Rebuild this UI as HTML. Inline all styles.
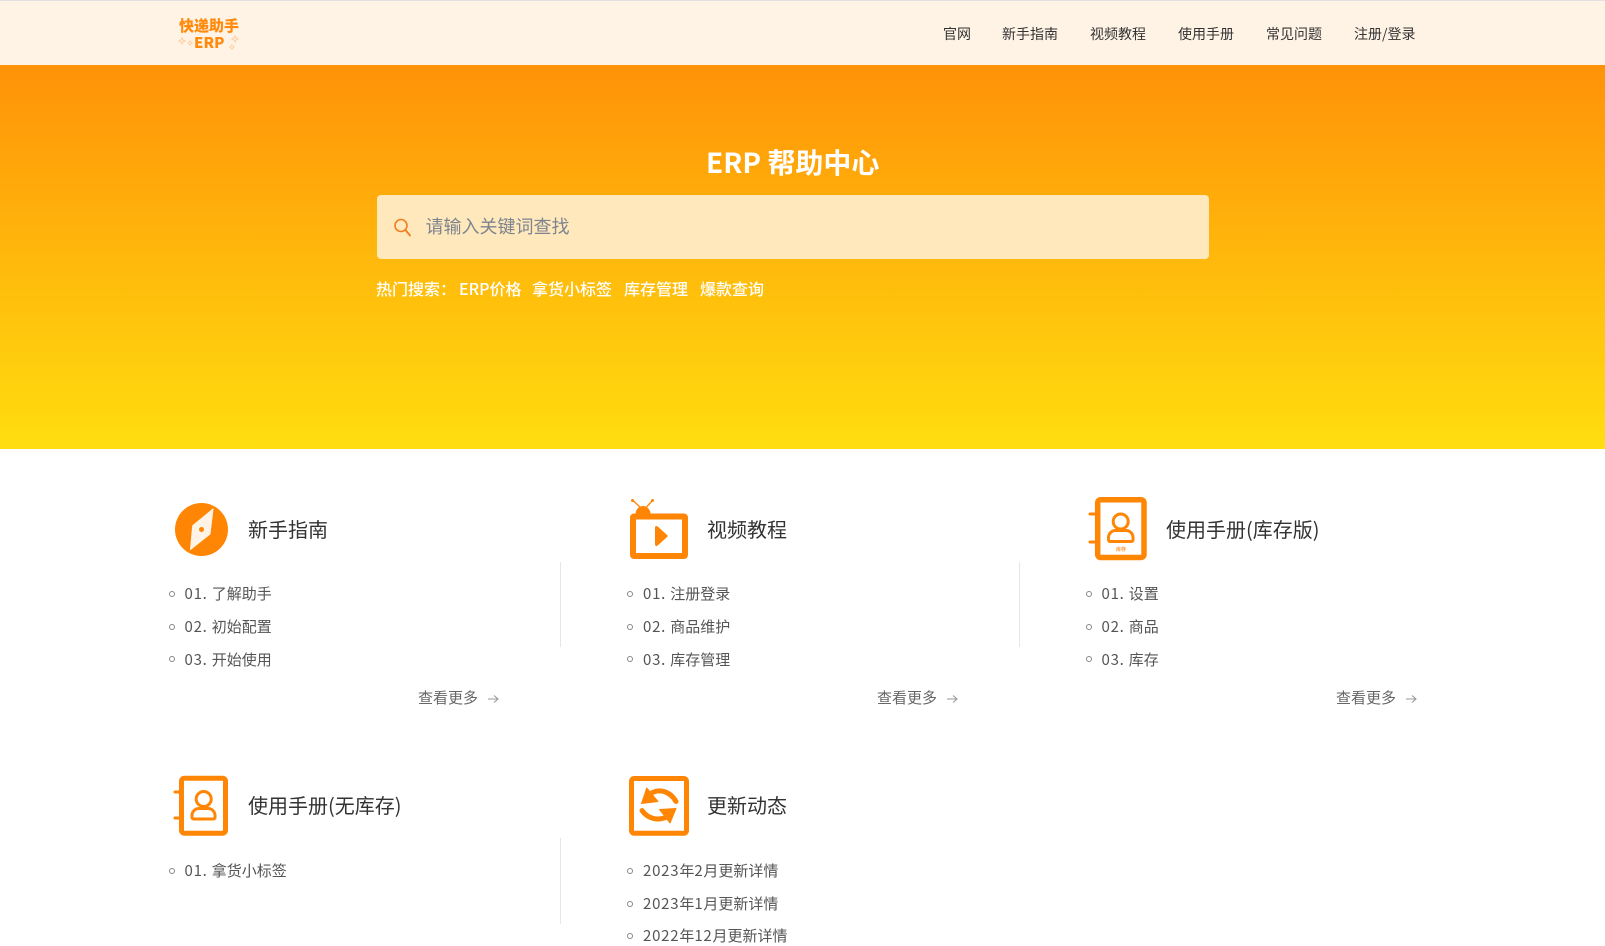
<!DOCTYPE html>
<html lang="zh-CN">
<head>
<meta charset="utf-8">
<title>ERP 帮助中心</title>
<style>
html,body{margin:0;padding:0;background:#fff;}
body{width:1605px;height:942px;overflow:hidden;position:relative;font-family:"Noto Sans CJK SC","Liberation Sans",sans-serif;}
.a{position:absolute;white-space:nowrap;line-height:20px;}
#top{position:absolute;left:0;top:0;width:1605px;height:65px;background:#fff3e6;border-top:1px solid #dfe1e3;box-sizing:border-box;}
#hero{position:absolute;left:0;top:65px;width:1605px;height:384px;background:linear-gradient(180deg,#ff9208,#ffde0f);}
.nav{font-size:14px;color:#333;top:24px;}
.hot{font-size:16px;color:#fff;top:278px;font-weight:500;}
.t{font-size:20px;color:#333;}
.li{font-size:15px;color:#555;}
.li span{letter-spacing:.75px;}
.b{position:absolute;width:4px;height:4px;border:1px solid #84878c;border-radius:50%;box-sizing:content-box;}
.more{font-size:15px;color:#666;}
.line{position:absolute;width:1px;background:#e6e6e6;}
svg{position:absolute;left:0;top:0;overflow:visible;}
.logo{font-weight:900;color:#ff8a0c;filter:blur(.3px);}
</style>
</head>
<body>
<div id="top"></div>
<div id="hero"></div>

<div class="a logo" style="left:179px;top:16px;font-size:15px;">快递助手</div>
<div class="a logo" style="left:194px;top:33px;font-size:15px;">ERP</div>

<a class="a nav" style="left:943px">官网</a>
<a class="a nav" style="left:1002px">新手指南</a>
<a class="a nav" style="left:1090px">视频教程</a>
<a class="a nav" style="left:1178px">使用手册</a>
<a class="a nav" style="left:1266px">常见问题</a>
<a class="a nav" style="left:1354px">注册/登录</a>

<div class="a" style="left:706px;top:147px;line-height:30px;font-size:28px;font-weight:700;color:#fff;">ERP 帮助中心</div>
<div style="position:absolute;left:377px;top:195px;width:832px;height:64px;background:#ffe8bb;border-radius:4px;"></div>
<div class="a" style="left:425.500px;top:215px;line-height:22px;font-size:18px;color:#7d8490;">请输入关键词查找</div>

<div class="a hot" style="left:376px">热门搜索：</div>
<div class="a hot" style="left:459px">ERP价格</div>
<div class="a hot" style="left:532px">拿货小标签</div>
<div class="a hot" style="left:624px">库存管理</div>
<div class="a hot" style="left:700px">爆款查询</div>

<svg width="1605" height="942" viewBox="0 0 1605 942">
  <!-- logo sparkles -->
  <g fill="none" stroke="#ffcf9f" stroke-width="1">
    <path d="M182 38l1 2 2 1-2 1-1 2-1-2-2-1 2-1z"/>
    <path d="M190 41l1 1 1 1-1 1-1 1-1-1-1-1 1-1z"/>
    <path d="M235 36l1 2 2 1-2 1-1 2-1-2-2-1 2-1z"/>
    <path d="M232 45l1 1 1 1-1 1-1 1-1-1-1-1 1-1z"/>
  </g>
  <!-- search -->
  <circle cx="401" cy="225.500" r="6" fill="none" stroke="#f57c1f" stroke-width="1.600"/>
  <path d="M405.500 230L410 235.500" stroke="#f57c1f" stroke-width="1.800" stroke-linecap="round"/>

  <!-- compass -->
  <circle cx="201.500" cy="529.500" r="26.500" fill="#ff8605"/>
  <path d="M213 509L210 534L190.500 549.500L192.700 525.700Z" fill="#fff3e6" stroke="#fff3e6" stroke-width="1" stroke-linejoin="round"/>
  <circle cx="201.500" cy="529.500" r="2.500" fill="#ff8605"/>

  <!-- TV -->
  <rect x="633" y="516.500" width="52" height="39.500" rx="1" fill="none" stroke="#ff8605" stroke-width="6"/>
  <path d="M635.500 514a7.500 8 0 0 1 15 0z" fill="#ff8605"/>
  <path d="M640 507L633.500 501M646.500 507L652 501" stroke="#ff8605" stroke-width="1.300"/>
  <circle cx="632.500" cy="500.500" r="1.500" fill="#ff8605"/>
  <circle cx="652.500" cy="500.500" r="1.500" fill="#ff8605"/>
  <path d="M656.500 527.500L666 536L656.500 544.500Z" fill="#ff8605" stroke="#ff8605" stroke-width="3" stroke-linejoin="round"/>

  <!-- book 1 -->
  <rect x="1097.700" y="499.700" width="46.300" height="57.800" rx="3" fill="none" stroke="#ff8605" stroke-width="5.500"/>
  <path d="M1090 514H1096M1090 542H1096" stroke="#ff8605" stroke-width="3" stroke-linecap="round"/>
  <path d="M1115.500 530.500h10.500a7 7 0 0 1 7 7v2.500a1.500 1.500 0 0 1-1.500 1.500h-21.500a1.500 1.500 0 0 1-1.500-1.500v-2.500a7 7 0 0 1 7-7z" fill="#fff" stroke="#ff8605" stroke-width="3"/>
  <circle cx="1120.700" cy="521.500" r="7.500" fill="#fff" stroke="#ff8605" stroke-width="3"/>
  <text x="1121" y="551" text-anchor="middle" font-size="5" font-weight="700" fill="#ff9a3a" font-family="'Noto Sans CJK SC',sans-serif">库存</text>

  <!-- book 2 -->
  <rect x="181.500" y="778.200" width="44" height="55" rx="3" fill="none" stroke="#ff8605" stroke-width="5"/>
  <path d="M175 792H180M175 818H180" stroke="#ff8605" stroke-width="3" stroke-linecap="round"/>
  <path d="M199.500 808.500h8.500a7 7 0 0 1 7 7v2a1.500 1.500 0 0 1-1.500 1.500h-20a1.500 1.500 0 0 1-1.500-1.500v-2a7 7 0 0 1 7-7z" fill="#fff" stroke="#ff8605" stroke-width="3"/>
  <circle cx="203.700" cy="799" r="7.500" fill="#fff" stroke="#ff8605" stroke-width="3"/>

  <!-- refresh -->
  <rect x="631.500" y="778.500" width="55" height="54.700" rx="2.500" fill="none" stroke="#ff8605" stroke-width="5"/>
  <path d="M646.700 788L641.500 803.500L658 801.500Z" fill="#ff8605" stroke="#ff8605" stroke-width="1" stroke-linejoin="round"/>
  <path d="M650 794C659 788 670 791 676 801.500" fill="none" stroke="#ff8605" stroke-width="5" stroke-linecap="round"/>
  <path d="M676 808.500L670 823L659.500 809.500Z" fill="#ff8605" stroke="#ff8605" stroke-width="1" stroke-linejoin="round"/>
  <path d="M642 810.500C648 819 658 821 667 817" fill="none" stroke="#ff8605" stroke-width="5" stroke-linecap="round"/>

  <!-- more arrows -->
  <g fill="none" stroke="#999" stroke-width="1.100">
    <path d="M488 699H498M494 695.500L498 699L494 702.500"/>
    <path d="M947 699H957M953 695.500L957 699L953 702.500"/>
    <path d="M1406 699H1416M1412 695.500L1416 699L1412 702.500"/>
  </g>
</svg>

<div class="line" style="left:560px;top:562px;height:85px"></div>
<div class="line" style="left:1019px;top:562px;height:85px"></div>
<div class="line" style="left:560px;top:838px;height:86px"></div>

<div class="a t" style="left:248px;top:519px">新手指南</div>
<div class="a t" style="left:707px;top:519px">视频教程</div>
<div class="a t" style="left:1166px;top:519px">使用手册(库存版)</div>
<div class="a t" style="left:248px;top:795px">使用手册(无库存)</div>
<div class="a t" style="left:707px;top:795px">更新动态</div>

<i class="b" style="left:169px;top:591px"></i><div class="a li" style="left:184.500px;top:584px"><span>01. </span>了解助手</div>
<i class="b" style="left:169px;top:624px"></i><div class="a li" style="left:184.500px;top:617px"><span>02. </span>初始配置</div>
<i class="b" style="left:169px;top:656px"></i><div class="a li" style="left:184.500px;top:650px"><span>03. </span>开始使用</div>
<div class="a more" style="left:418px;top:688px">查看更多</div>

<i class="b" style="left:627px;top:591px"></i><div class="a li" style="left:643px;top:584px"><span>01. </span>注册登录</div>
<i class="b" style="left:627px;top:624px"></i><div class="a li" style="left:643px;top:617px"><span>02. </span>商品维护</div>
<i class="b" style="left:627px;top:656px"></i><div class="a li" style="left:643px;top:650px"><span>03. </span>库存管理</div>
<div class="a more" style="left:877px;top:688px">查看更多</div>

<i class="b" style="left:1086px;top:591px"></i><div class="a li" style="left:1101.500px;top:584px"><span>01. </span>设置</div>
<i class="b" style="left:1086px;top:624px"></i><div class="a li" style="left:1101.500px;top:617px"><span>02. </span>商品</div>
<i class="b" style="left:1086px;top:656px"></i><div class="a li" style="left:1101.500px;top:650px"><span>03. </span>库存</div>
<div class="a more" style="left:1336px;top:688px">查看更多</div>

<i class="b" style="left:169px;top:868px"></i><div class="a li" style="left:184.500px;top:861px"><span>01. </span>拿货小标签</div>

<i class="b" style="left:627px;top:868px"></i><div class="a li" style="left:643px;top:861px"><span>2023</span>年<span>2</span>月更新详情</div>
<i class="b" style="left:627px;top:901px"></i><div class="a li" style="left:643px;top:894px"><span>2023</span>年<span>1</span>月更新详情</div>
<i class="b" style="left:627px;top:933px"></i><div class="a li" style="left:643px;top:926px"><span>2022</span>年<span>12</span>月更新详情</div>
</body>
</html>
